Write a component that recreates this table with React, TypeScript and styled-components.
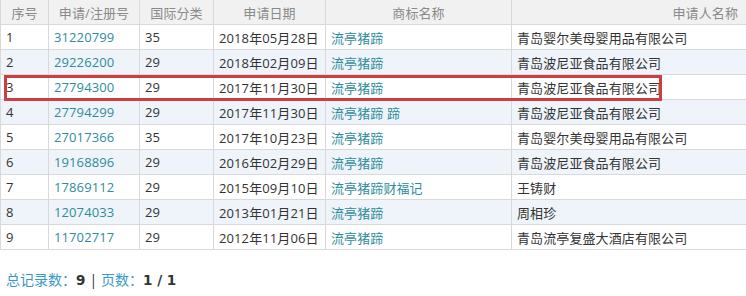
import React from "react";
import styled, { createGlobalStyle } from "styled-components";

const Global = createGlobalStyle`
  html, body { margin: 0; padding: 0; background: #ffffff; }
  body { font-family: "Open Sans", "Noto Sans CJK SC", sans-serif; }
`;

const Page = styled.div`
  width: 746px;
  height: 296px;
  overflow: hidden;
  background: #fff;
`;

const TableWrap = styled.div`
  position: relative;
`;

const Table = styled.table`
  width: 746px;
  border-collapse: collapse;
  table-layout: fixed;
  font-size: 13px;
  letter-spacing: 0.1px;
  color: #333;
`;

const Th = styled.th<{ $align?: string }>`
  height: 24px;
  padding: 0 8px;
  background: #f1f1f1;
  color: #8a8a8a;
  font-weight: normal;
  text-align: ${(p) => p.$align || "center"};
  border: 1px solid #d9d9d9;
  border-top: none;
  white-space: nowrap;
`;

const Tr = styled.tr<{ $alt: boolean }>`
  background: ${(p) => (p.$alt ? "#eef4fa" : "#ffffff")};
`;

const Td = styled.td<{ $link?: boolean }>`
  height: 24px;
  padding: 0 4px 0 5px;
  border: 1px solid #d9d9d9;
  color: ${(p) => (p.$link ? "#2f8c9c" : "#333")};
  white-space: nowrap;
  overflow: hidden;
`;

const Highlight = styled.div`
  position: absolute;
  left: 4px;
  top: 75px;
  width: 658px;
  height: 26px;
  box-sizing: border-box;
  border: 3px solid #cc3f40;
  pointer-events: none;
`;

const Footer = styled.div`
  margin-top: 20px;
  padding-left: 6px;
  font-size: 14px;
  line-height: 20px;
  color: #333;
`;

const Label = styled.span`
  color: #3b98c6;
`;

const Num = styled.b`
  font-family: "DejaVu Sans", sans-serif;
  font-size: 13.5px;
  color: #333;
`;

const Sep = styled.span`
  color: #333;
  margin: 0 4px;
`;

const rows = [
  ["1", "31220799", "35", "2018年05月28日", "流亭猪蹄", "青岛婴尔美母婴用品有限公司"],
  ["2", "29226200", "29", "2018年02月09日", "流亭猪蹄", "青岛波尼亚食品有限公司"],
  ["3", "27794300", "29", "2017年11月30日", "流亭猪蹄", "青岛波尼亚食品有限公司"],
  ["4", "27794299", "29", "2017年11月30日", "流亭猪蹄 蹄", "青岛波尼亚食品有限公司"],
  ["5", "27017366", "35", "2017年10月23日", "流亭猪蹄", "青岛婴尔美母婴用品有限公司"],
  ["6", "19168896", "29", "2016年02月29日", "流亭猪蹄", "青岛波尼亚食品有限公司"],
  ["7", "17869112", "29", "2015年09月10日", "流亭猪蹄财福记", "王铸财"],
  ["8", "12074033", "29", "2013年01月21日", "流亭猪蹄", "周相珍"],
  ["9", "11702717", "29", "2012年11月06日", "流亭猪蹄", "青岛流亭复盛大酒店有限公司"],
];

export default function App() {
  return (
    <Page>
      <Global />
      <TableWrap>
        <Table>
          <colgroup>
            <col style={{ width: 48 }} />
            <col style={{ width: 91 }} />
            <col style={{ width: 74 }} />
            <col style={{ width: 112 }} />
            <col style={{ width: 186 }} />
            <col style={{ width: 235 }} />
          </colgroup>
          <thead>
            <tr>
              <Th>序号</Th>
              <Th>申请/注册号</Th>
              <Th>国际分类</Th>
              <Th>申请日期</Th>
              <Th>商标名称</Th>
              <Th $align="right">申请人名称</Th>
            </tr>
          </thead>
          <tbody>
            {rows.map((r, i) => (
              <Tr key={r[0]} $alt={i % 2 === 1}>
                <Td>{r[0]}</Td>
                <Td $link>{r[1]}</Td>
                <Td>{r[2]}</Td>
                <Td>{r[3]}</Td>
                <Td $link>{r[4]}</Td>
                <Td>{r[5]}</Td>
              </Tr>
            ))}
          </tbody>
        </Table>
        <Highlight />
      </TableWrap>
      <Footer>
        <Label>总记录数：</Label>
        <Num>9</Num>
        <Sep>|</Sep>
        <Label>页数：</Label>
        <Num>1 / 1</Num>
      </Footer>
    </Page>
  );
}
